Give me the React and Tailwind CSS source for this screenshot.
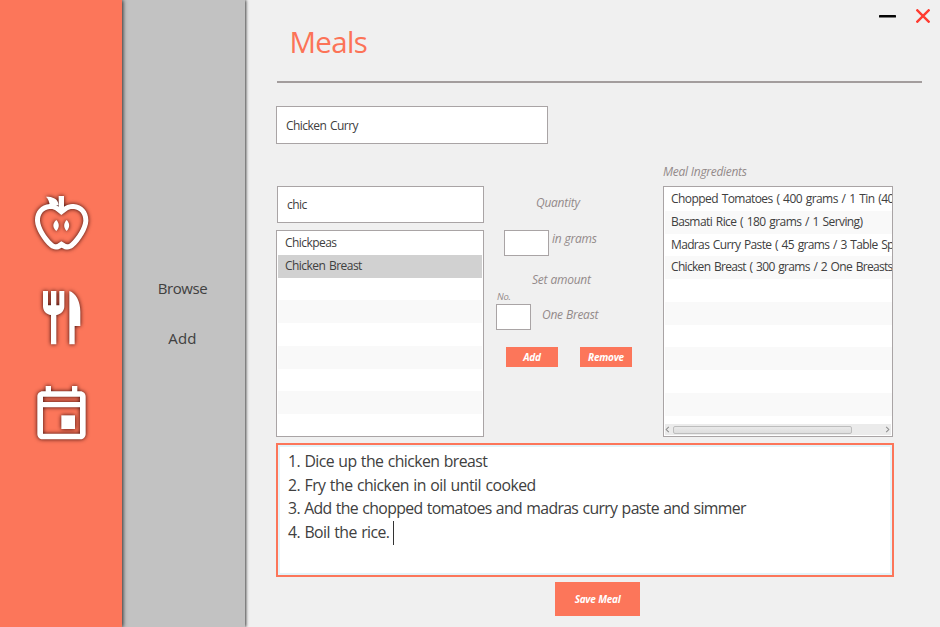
import React from 'react';

const ingredients = ['Chickpeas', 'Chicken Breast'];
const mealIngredients = [
  'Chopped Tomatoes ( 400 grams / 1 Tin (400 grams))',
  'Basmati Rice ( 180 grams / 1 Serving)',
  'Madras Curry Paste ( 45 grams / 3 Table Spoons)',
  'Chicken Breast ( 300 grams / 2 One Breasts)',
];
const mealTracking = ['tracking-[-0.57px]', 'tracking-[-0.59px]', 'tracking-[-0.65px]', 'tracking-[-0.68px]'];

function NavIcon({ children }) {
  return (
    <svg
      viewBox="0 0 300 270"
      className="ml-5 h-[90px] w-[100px] overflow-visible drop-shadow-[0_0_2px_rgba(40,0,0,0.95)]"
      fill="#fff"
    >
      {children}
    </svg>
  );
}

function Sidebar() {
  return (
    <nav className="z-20 flex w-[122px] shrink-0 flex-col gap-[5px] bg-[#fc765a] pt-[180px] shadow-[1px_0_4px_rgba(0,0,0,0.8)]">
      <NavIcon>
        <path
          fillRule="evenodd"
          d="M116 48H132V80C142 73 151 71 161 72C188 74 206 95 205 123C204 147 182 183 160 202C150 210 138 211 125 203C112 211 100 210 90 202C68 183 46 147 45 123C44 95 62 74 89 72C99 71 108 73 116 80ZM124 105L109 93C102 87 95 86 88 87C71 89 60 102 60 122C61 141 79 171 98 188C105 194 110 194 116 189L124 184L133 189C140 194 145 194 152 188C171 171 189 141 190 122C190 102 179 89 162 87C154 86 147 87 140 93Z"
        />
        <path d="M78 50C98 50 114 55 116 76L90 78C88 67 86 57 78 50Z" />
        <path d="M109 120C119 130 119 143 109 153C97 143 97 130 109 120ZM140 120C150 130 150 143 140 153C130 143 130 130 140 120Z" />
      </NavIcon>
      <NavIcon>
        <path d="M69 48H84V91H93V48H109V91H118V48H133V94C133 108 122 119 109 120V208H93V120C79 119 69 108 69 94Z" />
        <path d="M148 48C168 54 181 80 181 110V153H164V208H148Z" />
      </NavIcon>
      <NavIcon>
        <path
          fillRule="evenodd"
          d="M77 48H93V64H156V48H172V64H181C190 64 197 71 197 80V192C197 201 190 208 181 208H68C59 208 52 201 52 192V80C52 71 59 64 68 64H77ZM69 80V96H180V80ZM69 112V191H180V112Z"
        />
        <rect x="124" y="136" width="41" height="41" />
      </NavIcon>
    </nav>
  );
}

function SubMenu() {
  return (
    <nav className="z-10 flex w-[123px] shrink-0 flex-col items-center gap-[26px] bg-[#c2c2c2] pt-[276px] pr-[2px] text-[15px] leading-[24px] tracking-[-0.4px] shadow-[1px_0_3px_rgba(0,0,0,0.75)]">
      <span>Browse</span>
      <span className="tracking-[0.2px]">Add</span>
    </nav>
  );
}

function ListRow({ index, text, selected, inset }) {
  const shade = selected ? 'bg-[#d1d1d1]' : index % 2 ? 'bg-[#f9f9f9]' : 'bg-white';
  return (
    <div className={'h-[22.75px] shrink-0 leading-[22.75px] whitespace-nowrap ' + inset + ' ' + shade}>{text}</div>
  );
}

function SearchColumn() {
  return (
    <div className="flex w-[208px] flex-col gap-[7px] pt-[186px]">
      <div className="ml-px flex h-[37px] items-center border border-[#a9a4a5] bg-white pl-[9px]">chic</div>
      <div className="flex h-[207px] flex-col overflow-hidden border border-[#a9a4a5] bg-white px-px pt-px">
        {Array.from({ length: 8 }, (_, i) => (
          <ListRow key={i} index={i} text={ingredients[i]} selected={i === 1} inset="pl-[7px]" />
        ))}
      </div>
    </div>
  );
}

function AmountColumn() {
  return (
    <div className="flex w-[179px] flex-col pt-[193px] text-[#938a8a] italic leading-[20px] tracking-[-0.25px] [word-spacing:0.3px]">
      <div className="ml-[52px]">Quantity</div>
      <div className="mt-[17px] ml-5 flex h-[26px] gap-1">
        <div className="w-[45px] border border-[#a9a4a5] bg-white" />
        <span className="-mt-px -ml-px">in grams</span>
      </div>
      <div className="mt-[14px] ml-[48px]">Set amount</div>
      <div className="ml-[13px] h-[14px] text-[9.5px] leading-[13px]">No.</div>
      <div className="ml-[12px] flex h-[26px] gap-[11px]">
        <div className="w-[35px] border border-[#a9a4a5] bg-white" />
        <span className="mt-px">One Breast</span>
      </div>
      <div className="mt-[17px] ml-[22px] flex gap-[22px] text-[10px] font-bold text-white">
        <button className="h-5 w-[52px] bg-[#fc765a] italic leading-[18px]">Add</button>
        <button className="h-5 w-[52px] bg-[#fc765a] italic leading-[18px]">Remove</button>
      </div>
    </div>
  );
}

function Chevron({ d }) {
  return (
    <svg viewBox="0 0 5 8" className="h-[7px] w-[5px]" fill="none" stroke="#8c8c8c" strokeWidth="1.2">
      <path d={d} />
    </svg>
  );
}

function MealColumn() {
  return (
    <div className="flex w-[230px] flex-col pt-[162px]">
      <div className="h-[24px] leading-[20px] tracking-[-0.3px] [word-spacing:0.4px] text-[#938a8a] italic">Meal Ingredients</div>
      <div className="flex h-[251px] flex-col border border-[#a9a4a5] bg-white pt-px pb-px pl-px">
        <div className="flex flex-1 flex-col overflow-hidden">
          {Array.from({ length: 10 }, (_, i) => (
            <ListRow key={i} index={i} text={mealIngredients[i]} inset={'pl-[6px] ' + (mealTracking[i] ?? '')} />
          ))}
        </div>
        <div className="mr-px flex h-[11px] items-center bg-[#ebebeb] pr-px">
          <Chevron d="M4 1L1 4L4 7" />
          <div className="ml-[3px] h-2 w-[179px] rounded-[2px] border border-[#bdbdbd] bg-gradient-to-b from-[#e9e9e9] to-[#dedede]" />
          <div className="flex-1" />
          <Chevron d="M1 1L4 4L1 7" />
        </div>
      </div>
    </div>
  );
}

export default function App() {
  return (
    <div className="flex h-[627px] w-[940px] overflow-hidden bg-[#f0f0f0] font-['Open_Sans','Noto_Sans',sans-serif] text-[12px] tracking-[-0.55px] [word-spacing:1.2px] text-[#404040]">
      <Sidebar />
      <SubMenu />
      <main className="flex w-[695px] flex-col">
        <header className="ml-8 flex h-[83px] w-[645px] shrink-0 justify-between border-b-2 border-[#a39d9d] pl-[12.5px]">
          <h1 className="text-[29.5px] leading-[83px] font-normal tracking-[-0.7px] text-[#fc7357]">Meals</h1>
          <div className="-mr-[8px] flex h-8 items-center gap-[20px]">
            <svg viewBox="0 0 17 3" className="h-[3px] w-[17px]">
              <rect width="17" height="2.6" rx="0.6" fill="#050505" />
            </svg>
            <svg viewBox="0 0 14 14" className="h-[14px] w-[14px]" stroke="#ff3b30" strokeWidth="2.4">
              <path d="M0.5 0.5L13.5 13.5M13.5 0.5L0.5 13.5" />
            </svg>
          </div>
        </header>
        <div className="mt-[23px] ml-[31px] flex h-[38px] w-[272px] shrink-0 items-center border border-[#a9a4a5] bg-white pt-px pl-[9px]">
          Chicken Curry
        </div>
        <section className="-mt-[144px] ml-[31px] flex h-[437px] shrink-0">
          <SearchColumn />
          <AmountColumn />
          <MealColumn />
        </section>
        <div className="mt-[6px] ml-[31px] h-[134px] w-[618px] shrink-0 border-2 border-[#fc765a] bg-white">
          <div className="h-full border-2 border-[#e3f4fa] pt-[3px] pl-[8px] text-[15.8px] leading-[23.5px] [word-spacing:0.8px] whitespace-nowrap">
            <p className="tracking-[-0.57px]">1. Dice up the chicken breast</p>
            <p className="tracking-[-0.52px]">2. Fry the chicken in oil until cooked</p>
            <p className="tracking-[-0.645px]">3. Add the chopped tomatoes and madras curry paste and simmer</p>
            <p className="flex tracking-[-0.55px]">
              4. Boil the rice.
              <span className="ml-[4px] h-[24px] w-px bg-[#333]" />
            </p>
          </div>
        </div>
        <button className="mt-[5px] ml-[310px] h-[34px] w-[85px] shrink-0 bg-[#fc765a] text-[10px] font-bold tracking-[-0.3px] [word-spacing:0.5px] text-white italic">
          Save Meal
        </button>
      </main>
    </div>
  );
}
